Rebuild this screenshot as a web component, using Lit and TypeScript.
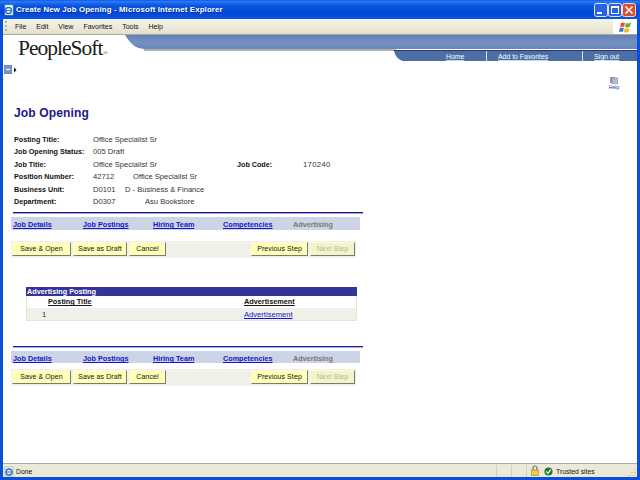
import { LitElement, html, css } from "lit";
import { customElement } from "lit/decorators.js";

const tabs = ["Job Details", "Job Postings", "Hiring Team", "Competencies"];

@customElement("app-root")
export class AppRoot extends LitElement {
  static styles = css`
    :host { display: flex; flex-direction: column; width: 640px; height: 480px; overflow: hidden; font-family: "Liberation Sans", Arial, sans-serif; background: #0a4fdc; }
    * { box-sizing: border-box; }
    .title { height: 19px; flex: none; display: flex; align-items: center; padding: 0 4px 0 4px; color: #fff; background: linear-gradient(#0a58e6 0, #2a78f4 8%, #0a54e0 30%, #0348d8 70%, #0a56e4 100%); }
    .title .ie { margin-right: 1px; }
    .title .t { font: bold 7.8px/19px "Liberation Sans", sans-serif; letter-spacing: .15px; text-shadow: 1px 1px 0 #0a2f9c; flex: 1; white-space: nowrap; }
    .wbtns { display: flex; }
    .wb { width: 14px; height: 14px; display: block; }
    .main { flex: 1; display: flex; flex-direction: column; margin: 0 3px; background: #fff; min-height: 0; }
    .menu { height: 16px; flex: none; display: flex; align-items: center; background: linear-gradient(#f4f3ea, #ece9d8 60%, #e2dfcc); border-bottom: 1px solid #aca899; color: #111; font: 7px "Liberation Sans", sans-serif; }
    .grip { width: 2px; height: 11px; margin-left: 2px; margin-right: 8px; background: repeating-linear-gradient(#b5b2a0 0 2px, transparent 2px 4px); }
    .menu span.m { margin-right: 10px; }
    .flag { width: 24px; height: 15px; background: #fff; display: flex; align-items: center; justify-content: center; }
    .head { height: 26px; flex: none; position: relative; }
    .head svg { display: block; }
    .logo { position: absolute; left: 15px; top: 1px; font: 21.5px/24px "Liberation Serif", serif; letter-spacing: -1px; color: #1c1c1c; }
    .logo sup { font-size: 6px; letter-spacing: 0; vertical-align: baseline; color: #555; margin-left: 1px; }
    .links { position: absolute; left: 392px; top: 16px; height: 10px; display: flex; color: #fff; font: 6.9px/12px "Liberation Sans", sans-serif; }
    .links div { height: 10px; border-right: 1px solid #d8dfee; padding-left: 11px; }
    .links div:last-child { border: 0; }
    .links span { text-decoration: underline; text-decoration-color: #cdd6ea; }
    .links .home { width: 92px; padding-left: 51px; }
    .links .fav { width: 96px; }
    .links .out { width: 54px; }
    .nav { height: 40px; flex: none; display: flex; align-items: flex-start; justify-content: space-between; padding-top: 4px; }
    .navicon { margin-left: 1px; }
    .body { flex: 1; display: flex; flex-direction: column; padding-left: 9px; font-size: 7.6px; color: #222; min-height: 0; }
    .help { width: 12px; margin: 12px 17px 0 0; display: flex; flex-direction: column; align-items: center; color: #223a9a; font: 5.2px/4px "Liberation Sans", sans-serif; }
    .help span { margin-top: 1px; }
    .h1 { font: bold 12.1px/15px "Liberation Sans", sans-serif; color: #1a1a8c; margin: 5px 0 0 2px; height: 15px; letter-spacing: .1px; }
    .form { margin: 13px 0 0 2px; display: grid; grid-template-columns: 79px 144px 66px 1fr; grid-auto-rows: 12.4px; line-height: 12px; font-size: 7.6px; }
    .form b { font-weight: bold; font-size: 7.2px; color: #111; white-space: nowrap; }
    .wide { grid-column: span 3; }
    .v { display: flex; white-space: nowrap; color: #333; }
    .code { letter-spacing: .4px; }
    .n1 { width: 40px; } .n2 { width: 32px; } .n3 { width: 52px; }
    .rule { height: 2px; width: 350px; border-top: 1px solid #14148c; border-bottom: 1px solid #a8a8d8; margin: 3.600px 0 0 1px; }
    .rule.two { border-top-color: #2323a0; margin-top: 24.600px; }
    .tabs { margin-top: 3.400px; width: 349px; height: 13px; margin-left: -1px; background: #ccd4e6; display: grid; grid-template-columns: repeat(5, 70px); padding-left: 2px; font: bold 7.25px/15px "Liberation Sans", sans-serif; }
    .tabs.two { margin-top: 3.400px; height: 12px; line-height: 15px; }
    .tabs a { color: #1414c8; text-decoration: underline; white-space: nowrap; }
    .tabs span { color: #777; }
    .tools { width: 345px; height: 17px; margin-left: -1px; background: #f0f0e8; display: flex; align-items: flex-start; padding: 1px 0 0 1px; gap: 2px; margin-top: 11px; }
    .tools.two { margin-top: 6px; }
    .btn { height: 14px; background: #ffffb8; border: 1px solid; border-color: #fbfbe0 #7b7b70 #7b7b70 #fbfbe0; color: #111; font: 7px/12px "Liberation Sans", sans-serif; letter-spacing: .09px; text-align: center; flex: none; white-space: nowrap; }
    .btn.off { background: #f4f4c8; color: #b4b4a8; margin-right: 1px; }
    .w59 { width: 59px; } .w54 { width: 54px; } .w37 { width: 37px; } .w57 { width: 57px; } .w45 { width: 45px; }
    .fill { flex: 1; }
    .grid { margin: 29px 0 0 14px; width: 331px; border: 1px solid #e4e4d8; border-top: 0; font-size: 7.6px; }
    .gh { height: 9px; background: #333399; color: #fff; font: bold 7.3px/10px "Liberation Sans", sans-serif; margin: 0 -1px; padding-left: 1px; }
    .gc { height: 12px; display: grid; grid-template-columns: 217px 1fr; font-weight: bold; font-size: 7.3px; line-height: 12px; color: #111; }
    .gc span { text-decoration: underline; padding-left: 21px; }
    .gc span + span { padding-left: 0; }
    .gr { height: 12px; display: grid; grid-template-columns: 217px 1fr; background: #f0f0e8; line-height: 13px; color: #333; }
    .gr span { padding-left: 15px; }
    .gr a { color: #1414d8; text-decoration: underline; }
    .status { height: 14px; flex: none; display: flex; align-items: center; position: relative; background: #ece9d8; border-top: 1px solid #b0ad9c; color: #111; font: 6.8px "Liberation Sans", sans-serif; padding-top: 1px; }
    .done { width: 493px; display: flex; align-items: center; gap: 1px; padding-left: 1px; }
    .cell { height: 12px; width: 15px; border-left: 1px solid #d4d0bf; flex: none; }
    .lock { width: 16px; height: 12px; border-left: 1px solid #d4d0bf; display: flex; justify-content: center; }
    .zone { display: flex; align-items: center; gap: 3px; margin-left: 2px; }
    .resize { position: absolute; right: 0; bottom: 0; }
    .bot { height: 3px; flex: none; background: #0a4fdc; }
  `;

  private toolbar(two = false) {
    return html`<div class="tools ${two ? "two" : ""}">
      <div class="btn w59">Save &amp; Open</div>
      <div class="btn w54">Save as Draft</div>
      <div class="btn w37">Cancel</div>
      <div class="fill"></div>
      <div class="btn w57">Previous Step</div>
      <div class="btn off w45">Next Step</div>
    </div>`;
  }

  private tabBar(two = false) {
    return html`<div class="tabs ${two ? "two" : ""}">${tabs.map((t) => html`<a>${t}</a>`)}<span>Advertising</span></div>`;
  }

  render() {
    return html`
      <div class="title">
        <svg class="ie" width="11" height="12" viewBox="0 0 11 12"><rect x="1" y="1" width="8" height="10" fill="#fff" stroke="#8aa" stroke-width=".6"/><circle cx="4.500" cy="6.500" r="3" fill="none" stroke="#2a6cc8" stroke-width="1.400"/><path d="M2 6.500h5" stroke="#2a6cc8"/></svg>
        <div class="t">Create New Job Opening - Microsoft Internet Explorer</div>
        <div class="wbtns">
          <svg class="wb" viewBox="0 0 14 14"><rect x=".5" y=".5" width="13" height="13" rx="2" fill="#2a62e0" stroke="#dfe8fb"/><rect x="3" y="9" width="5" height="2" fill="#fff"/></svg>
          <svg class="wb" viewBox="0 0 14 14"><rect x=".5" y=".5" width="13" height="13" rx="2" fill="#2a62e0" stroke="#dfe8fb"/><rect x="3.500" y="3.500" width="7" height="7" fill="none" stroke="#fff"/><rect x="3" y="3" width="8" height="2" fill="#fff"/></svg>
          <svg class="wb" viewBox="0 0 14 14"><rect x=".5" y=".5" width="13" height="13" rx="2" fill="#d8502e" stroke="#f0dcd4"/><path d="M3.500 3.500l7 7m0-7l-7 7" stroke="#fff" stroke-width="1.600"/></svg>
        </div>
      </div>
      <div class="main">
        <div class="menu">
          <div class="grip"></div>
          <span class="m">File</span><span class="m">Edit</span><span class="m">View</span><span class="m">Favorites</span><span class="m">Tools</span><span class="m">Help</span>
          <div class="fill"></div>
          <div class="flag"><svg width="13" height="12" viewBox="0 0 13 12"><path d="M2 2q2-1 4 0l-1 4q-2-1-4 0z" fill="#e0502c"/><path d="M7 2q2 1 5-.5l-1 4q-2 1.500-5 .5z" fill="#6ab030"/><path d="M1 7q2-1 3.800 0l-1 4q-2-1-4 0z" fill="#3a70d0"/><path d="M5.800 7q2 1 4.800 0l-1 4q-2 1-4.800 0z" fill="#f0c020"/></svg></div>
        </div>
        <div class="head">
          <svg width="634" height="26" viewBox="0 0 634 26">
            <defs><linearGradient id="b" x1="0" y1="0" x2="0" y2="1"><stop offset="0" stop-color="#6281b8"/><stop offset=".5" stop-color="#7390c2"/><stop offset="1" stop-color="#6a87bb"/></linearGradient></defs>
            <path d="M122 0H634V14H141Q130 14 122 0Z" fill="url(#b)"/>
            <rect x="141" y="14" width="252" height="2" fill="#b4b4a8"/>
            <rect x="391" y="15" width="243" height="1" fill="#3c2c78"/>
            <path d="M391 16H634V26H400Q393 24 391 16Z" fill="#4a6fa5"/>
          </svg>
          <div class="logo">PeopleSoft<sup>®</sup></div>
          <div class="links">
            <div class="home"><span>Home</span></div>
            <div class="fav"><span>Add to Favorites</span></div>
            <div class="out"><span>Sign out</span></div>
          </div>
        </div>
        <div class="nav">
          <svg class="navicon" width="15" height="10" viewBox="0 0 15 10"><rect x=".5" y=".5" width="7" height="8" fill="#7c94cc" stroke="#7788aa"/><path d="M2 4.500h4" stroke="#fff"/><path d="M10 2.500l2.500 2.500l-2.500 2.500z" fill="#111"/></svg>
          <div class="help">
            <svg width="8" height="7" viewBox="0 0 8 7"><rect x="0" y="0" width="5" height="6" fill="#8a9ac0"/><rect x="2" y="1" width="6" height="6" fill="#b5bdd4" stroke="#777" stroke-width=".5"/></svg>
            <span>Help</span>
          </div>
        </div>
        <div class="body">
          <div class="h1">Job Opening</div>
          <div class="form">
            <b>Posting Title:</b><div class="v wide">Office Specialist Sr</div>
            <b>Job Opening Status:</b><div class="v wide">005 Draft</div>
            <b>Job Title:</b><div class="v">Office Specialist Sr</div><b>Job Code:</b><div class="v code">170240</div>
            <b>Position Number:</b><div class="v wide"><span class="n1">42712</span>Office Specialist Sr</div>
            <b>Business Unit:</b><div class="v wide"><span class="n2">D0101</span>D - Business &amp; Finance</div>
            <b>Department:</b><div class="v wide"><span class="n3">D0307</span>Asu Bookstore</div>
          </div>
          <div class="rule"></div>
          ${this.tabBar()}
          ${this.toolbar()}
          <div class="grid">
            <div class="gh">Advertising Posting</div>
            <div class="gc"><span>Posting Title</span><span>Advertisement</span></div>
            <div class="gr"><span>1</span><a>Advertisement</a></div>
          </div>
          <div class="rule two"></div>
          ${this.tabBar(true)}
          ${this.toolbar(true)}
        </div>
        <div class="status">
          <div class="done">
            <svg width="11" height="11" viewBox="0 0 11 11"><rect x="1" y="1" width="8" height="9" fill="#fff" stroke="#8aa" stroke-width=".6"/><circle cx="5" cy="6" r="3" fill="none" stroke="#2a6cc8" stroke-width="1.400"/><path d="M2.500 6h5" stroke="#2a6cc8"/></svg>
            Done
          </div>
          <div class="cell"></div><div class="cell"></div>
          <div class="lock"><svg width="10" height="11" viewBox="0 0 10 11"><path d="M3 5V3a2 2 0 0 1 4 0v2" fill="none" stroke="#777" stroke-width="1.200"/><rect x="1.500" y="5" width="7" height="5.500" fill="#f0d040" stroke="#a08020" stroke-width=".6"/></svg></div>
          <div class="zone">
            <svg width="9" height="9" viewBox="0 0 10 10"><circle cx="5" cy="5" r="4.500" fill="#1e7a2e"/><path d="M2.500 5l2 2 3-4" fill="none" stroke="#fff" stroke-width="1.400"/></svg>
            Trusted sites
          </div>
          <svg class="resize" width="10" height="10" viewBox="0 0 10 10"><path d="M8 2v1M5 5v1M8 5v1M2 8v1M5 8v1M8 8v1" stroke="#a8a594"/></svg>
        </div>
      </div>
      <div class="bot"></div>
    `;
  }
}
